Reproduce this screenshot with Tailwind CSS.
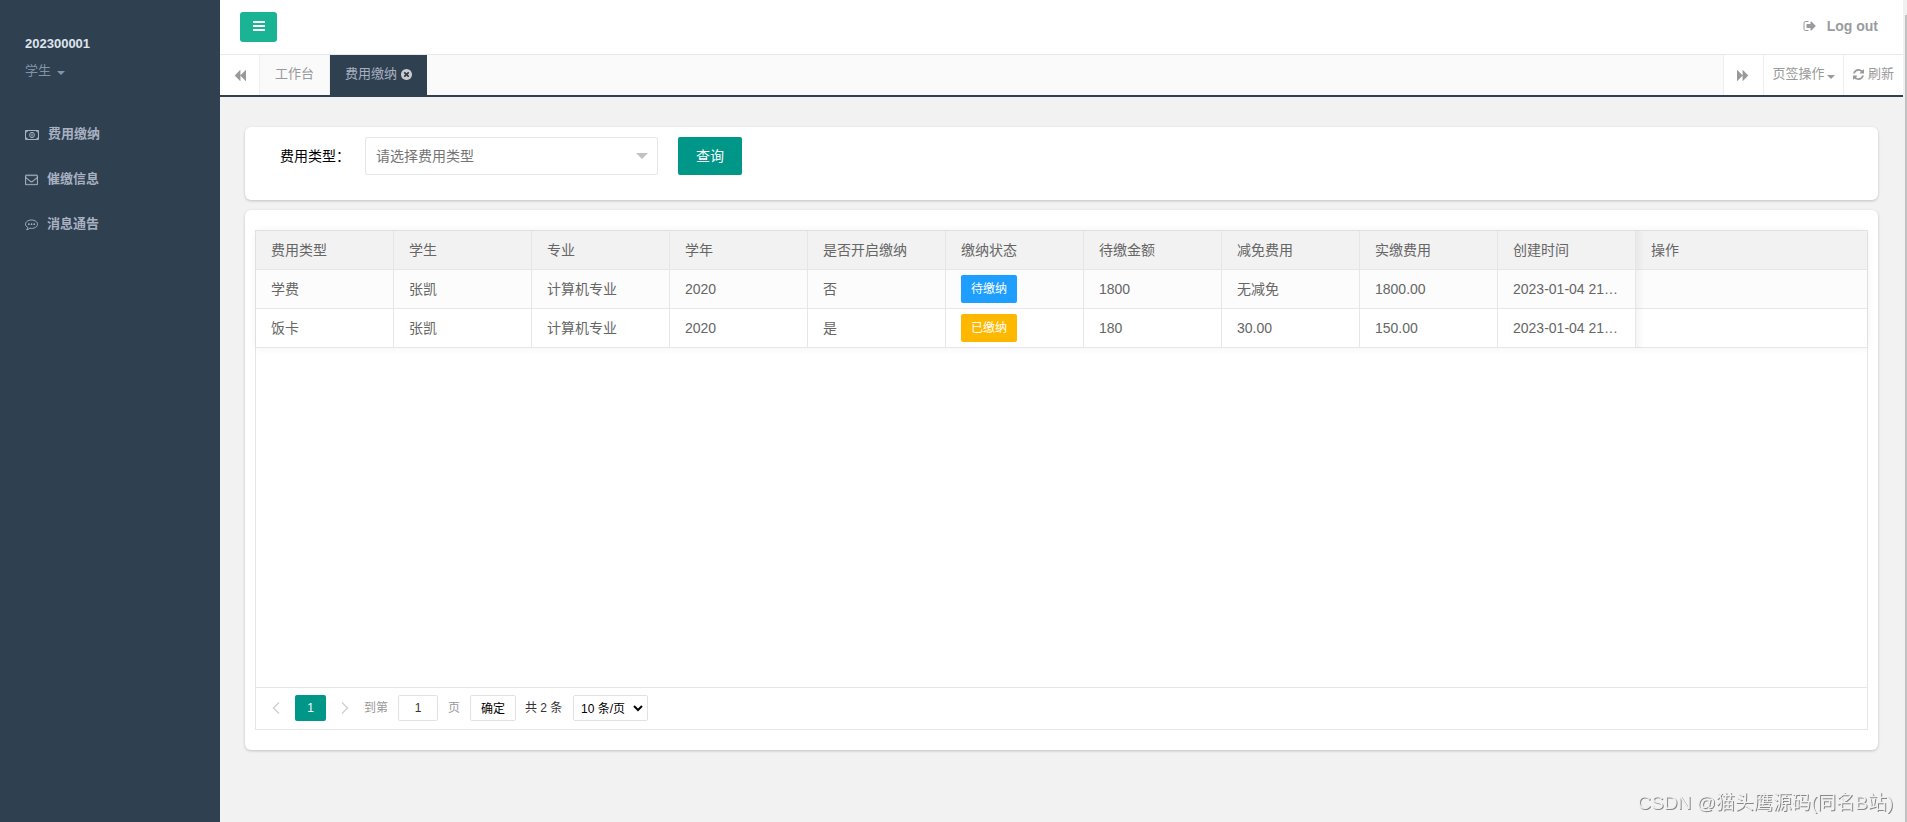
<!DOCTYPE html>
<html lang="zh-CN">
<head>
<meta charset="utf-8">
<title>费用缴纳</title>
<script src="https://cdn.jsdelivr.net/npm/@tailwindcss/browser@4"></script>
</head>
<body class="flex h-screen overflow-hidden bg-[#f2f2f2] font-['Liberation_Sans','Noto_Sans_CJK_SC',sans-serif] text-sm text-[#666]">

<aside class="flex w-[220px] shrink-0 flex-col bg-[#2f4050] text-[13px]">
  <div class="flex flex-col px-[25px] pt-[33px] pb-[29px]">
    <strong class="text-[13px] leading-[22px] text-[#dfe4ed]">202300001</strong>
    <button class="mt-1 flex items-center gap-[6px] leading-6 text-[#8095a8]">学生
      <svg class="mt-1" width="8" height="4" viewBox="0 0 8 4" fill="currentColor"><path d="M0 0h8L4 4z"/></svg>
    </button>
  </div>
  <nav class="flex flex-col font-bold text-[#a7b1c2]">
    <a href="#" class="flex h-[45px] items-center gap-[9px] px-[25px]">
      <svg width="14" height="10" viewBox="0 0 14 10" fill="none" stroke="currentColor"><path d="M.5.500h13v9H.5z"/><path d="M1 1h1.500L1 2.500zM13 1h-1.500L13 2.500zM1 9h1.500L1 7.500zM13 9h-1.500L13 7.500z"/><ellipse cx="7" cy="5" rx="2.300" ry="2.700"/><path d="M7 3.500v3"/></svg>
      费用缴纳</a>
    <a href="#" class="flex h-[45px] items-center gap-[9px] px-[25px]">
      <svg width="13" height="13" viewBox="0 0 1792 1792" fill="currentColor" stroke="currentColor" stroke-width="40"><path d="M1664 1504v-768q-32 36-69 66-268 206-426 338-51 43-83 67t-86.500 48.500-102.500 24.500h-2q-48 0-102.500-24.500t-86.500-48.500-83-67q-158-132-426-338-37-30-69-66v768q0 13 9.500 22.500t22.500 9.500h1472q13 0 22.500-9.500t9.500-22.500zm0-1051v-24.500l-.5-13-3-12.500-5.500-9-9-7.500-14-2.500h-1472q-13 0-22.500 9.500t-9.500 22.500q0 168 147 284 193 152 401 317 6 5 35 29.500t46 37.500 44.500 31.500 50.500 27.500 43 9h2q20 0 43-9t50.500-27.500 44.500-31.500 46-37.500 35-29.500q208-165 401-317 54-43 100.500-115.500t46.500-131.500zm128-37v1088q0 66-47 113t-113 47h-1472q-66 0-113-47t-47-113v-1088q0-66 47-113t113-47h1472q66 0 113 47t47 113z"/></svg>
      催缴信息</a>
    <a href="#" class="flex h-[45px] items-center gap-[9px] px-[25px]">
      <svg width="13" height="13" viewBox="0 0 13 13" fill="none" stroke="currentColor"><path d="M6.500 2C3.200 2 .5 3.900.5 6.200c0 1.400.9 2.500 2.300 3.300-.2.900-.6 1.600-1.200 2.200 1.300-.2 2.300-.7 3.200-1.500.5.100 1.100.2 1.700.2 3.300 0 6-1.900 6-4.200S9.800 2 6.500 2z"/><g fill="currentColor" stroke="none"><circle cx="3.800" cy="6.200" r=".9"/><circle cx="6.500" cy="6.200" r=".9"/><circle cx="9.200" cy="6.200" r=".9"/></g></svg>
      消息通告</a>
  </nav>
</aside>

<div class="flex min-w-0 flex-1 flex-col">
  <header class="flex h-[55px] shrink-0 items-center justify-between border-b border-[#e7eaec] bg-white pr-[29px] pl-5">
    <button aria-label="菜单" class="flex h-[30px] w-[37px] items-center justify-center rounded-[3px] bg-[#1ab394] text-white">
      <svg class="mb-[2px]" width="12" height="10" viewBox="0 0 12 10" fill="currentColor"><path d="M0 0h12v2H0zM0 4h12v2H0zM0 8h12v2H0z"/></svg>
    </button>
    <a href="#" class="flex items-center gap-[10px] pb-[2px] font-bold text-[#999c9e]">
      <svg width="14" height="14" viewBox="0 0 1792 1792" fill="currentColor"><path d="M704 1440q0 4 1 20t.5 26.500-3 23.500-10 19.500-20.500 6.500h-320q-119 0-203.500-84.500t-84.500-203.500v-704q0-119 84.500-203.500t203.500-84.500h320q13 0 22.500 9.500t9.500 22.500q0 4 1 20t.5 26.500-3 23.500-10 19.500-20.500 6.500h-320q-66 0-113 47t-47 113v704q0 66 47 113t113 47h312l11.500 1 11.500 3 8 5.500 7 9 2 13.500zm928-544q0 26-19 45l-544 544q-19 19-45 19t-45-19-19-45v-288h-448q-26 0-45-19t-19-45v-384q0-26 19-45t45-19h448v-288q0-26 19-45t45-19 45 19l544 544q19 19 19 45z"/></svg>
      Log out</a>
  </header>

  <div class="flex h-[42px] shrink-0 items-stretch border-b-2 border-[#2f4050] bg-[#fafafa] text-[13px] text-[#999]">
    <button aria-label="向左" class="flex w-10 items-center justify-center border-r border-[#eee] bg-white">
      <svg width="13" height="13" viewBox="0 0 1792 1792" fill="currentColor"><path d="M1747 141q19-19 32-13t13 32v1472q0 26-13 32t-32-13l-710-710q-9-9-13-19v710q0 26-13 32t-32-13l-710-710q-19-19-19-45t19-45l710-710q19-19 32-13t13 32v710q4-10 13-19z"/></svg>
    </button>
    <a href="#" class="flex items-center border-r border-[#eee] px-[15px] pb-px">工作台</a>
    <a href="#" class="flex items-center gap-1 bg-[#2f4050] px-[15px] pb-px text-[#a7b1c2]">费用缴纳
      <svg class="text-[#ccc]" width="11" height="11" viewBox="128 128 1536 1536" fill="currentColor"><path d="M1277 1122q0-26-19-45l-181-181 181-181q19-19 19-45 0-27-19-46l-90-90q-19-19-46-19-26 0-45 19l-181 181-181-181q-19-19-45-19-27 0-46 19l-90 90q-19 19-19 46 0 26 19 45l181 181-181 181q-19 19-19 45 0 27 19 46l90 90q19 19 46 19 26 0 45-19l181-181 181 181q19 19 45 19 27 0 46-19l90-90q19-19 19-46zm387-226q0 209-103 385.500t-279.500 279.500-385.500 103-385.500-103-279.500-279.500-103-385.500 103-385.500 279.500-279.500 385.500-103 385.500 103 279.500 279.500 103 385.500z"/></svg>
    </a>
    <button aria-label="向右" class="ml-auto flex w-10 items-center justify-center border-l border-[#eee] bg-white">
      <svg class="-scale-x-100" width="13" height="13" viewBox="0 0 1792 1792" fill="currentColor"><path d="M1747 141q19-19 32-13t13 32v1472q0 26-13 32t-32-13l-710-710q-9-9-13-19v710q0 26-13 32t-32-13l-710-710q-19-19-19-45t19-45l710-710q19-19 32-13t13 32v710q4-10 13-19z"/></svg>
    </button>
    <button class="flex w-20 items-center justify-center gap-[2px] border-l border-[#eee] bg-white pb-px">页签操作
      <svg class="mt-1" width="8" height="4" viewBox="0 0 8 4" fill="currentColor"><path d="M0 0h8L4 4z"/></svg>
    </button>
    <button class="mr-1 flex w-[60px] items-center justify-center gap-1 border-l border-[#eee] bg-white pb-px">
      <svg width="11" height="11" viewBox="128 128 1536 1536" fill="currentColor"><path d="M1639 1056q0 5-1 7-64 268-268 434.500t-478 166.500q-146 0-282.500-55t-243.500-157l-129 129q-19 19-45 19t-45-19-19-45v-448q0-26 19-45t45-19h448q26 0 45 19t19 45-19 45l-137 137q71 66 161 102t187 36q134 0 250-65t186-179q11-17 53-117 8-23 30-23h192q13 0 22.500 9.500t9.500 22.500zm25-800v448q0 26-19 45t-45 19h-448q-26 0-45-19t-19-45 19-45l138-138q-148-137-349-137-134 0-250 65t-186 179q-11 17-53 117-8 23-30 23h-199q-13 0-22.500-9.500t-9.500-22.500v-7q65-268 270-434.500t480-166.500q146 0 284 55.500t245 156.500l130-129q19-19 45-19t45 19 19 45z"/></svg>
      刷新</button>
  </div>

  <main class="flex flex-1 flex-col gap-[10px] pt-[30px] pr-[29px] pl-[25px]">
    <form class="flex rounded-md bg-white px-[35px] pt-[10px] pb-[25px] text-black shadow-[0_1px_3px_rgba(0,0,0,0.2)]">
      <label for="fee" class="w-[85px] leading-[38px]">费用类型：</label>
      <div class="relative w-[293px]">
        <select id="fee" class="h-[38px] w-full appearance-none rounded-[2px] border border-[#e6e6e6] bg-white px-[10px] text-[#757575]"><option>请选择费用类型</option></select>
        <svg class="pointer-events-none absolute top-4 right-[10px]" width="12" height="6" viewBox="0 0 12 6" fill="#c2c2c2"><path d="M0 0h12L6 6z"/></svg>
      </div>
      <button type="button" class="ml-5 h-[38px] w-16 rounded-[2px] bg-[#009688] text-white">查询</button>
    </form>

    <section class="rounded-md bg-white px-[10px] py-5 shadow-[0_1px_3px_rgba(0,0,0,0.2)]">
      <div class="flex h-[500px] flex-col border border-[#e6e6e6]">
        <div class="relative">
          <table class="w-full table-fixed border-separate border-spacing-0 text-left shadow-[0_0_8px_rgba(0,0,0,0.06)]">
            <colgroup><col class="w-[138px]"><col class="w-[138px]"><col class="w-[138px]"><col class="w-[138px]"><col class="w-[138px]"><col class="w-[138px]"><col class="w-[138px]"><col class="w-[138px]"><col class="w-[138px]"><col class="w-[138px]"><col></colgroup>
            <thead class="bg-[#f2f2f2]">
              <tr class="h-[39px] *:border-r *:border-b *:border-[#e6e6e6] *:px-[15px] *:font-normal *:last:border-r-0">
                <th>费用类型</th><th>学生</th><th>专业</th><th>学年</th><th>是否开启缴纳</th><th>缴纳状态</th><th>待缴金额</th><th>减免费用</th><th>实缴费用</th><th>创建时间</th><th>操作</th>
              </tr>
            </thead>
            <tbody>
              <tr class="h-[39px] bg-[#fcfcfc] *:border-r *:border-b *:border-[#e6e6e6] *:px-[15px] *:last:border-r-0">
                <td>学费</td><td>张凯</td><td>计算机专业</td><td>2020</td><td>否</td>
                <td><button class="block h-7 w-14 rounded-[2px] bg-[#1e9fff] text-xs text-white">待缴纳</button></td>
                <td>1800</td><td>无减免</td><td>1800.00</td><td class="whitespace-nowrap">2023-01-04 21…</td><td></td>
              </tr>
              <tr class="h-[39px] bg-white *:border-r *:border-b *:border-[#e6e6e6] *:px-[15px] *:last:border-r-0">
                <td>饭卡</td><td>张凯</td><td>计算机专业</td><td>2020</td><td>是</td>
                <td><button class="block h-7 w-14 rounded-[2px] bg-[#ffb800] text-xs text-white">已缴纳</button></td>
                <td>180</td><td>30.00</td><td>150.00</td><td class="whitespace-nowrap">2023-01-04 21…</td><td></td>
              </tr>
            </tbody>
          </table>
          <div class="pointer-events-none absolute inset-y-0 right-0 left-[1380px] bg-linear-to-r from-black/4 to-transparent to-[8px]"></div>
        </div>

        <div class="mt-auto flex h-[42px] items-start border-t border-[#e6e6e6] pt-[7px] pl-4 text-xs leading-[26px] text-[#333]">
          <button aria-label="上一页" class="flex h-[26px] w-2 items-center text-[#d2d2d2]">
            <svg width="8" height="12" viewBox="0 0 8 12" fill="none" stroke="currentColor" stroke-width="1.500"><path d="M7 .5L1.500 6 7 11.500"/></svg>
          </button>
          <button class="ml-[15px] h-[26px] w-[31px] rounded-[2px] bg-[#009688] text-white">1</button>
          <button aria-label="下一页" class="ml-[15px] flex h-[26px] w-2 items-center text-[#d2d2d2]">
            <svg width="8" height="12" viewBox="0 0 8 12" fill="none" stroke="currentColor" stroke-width="1.500"><path d="M1 .5L6.500 6 1 11.500"/></svg>
          </button>
          <label for="page" class="ml-[15px] text-[#999]">到第</label>
          <input id="page" value="1" class="ml-[10px] h-[26px] w-10 rounded-[2px] border border-[#e2e2e2] text-center">
          <span class="ml-[10px] text-[#999]">页</span>
          <button class="ml-[10px] h-[26px] w-[46px] rounded-[2px] border border-[#e2e2e2] text-black">确定</button>
          <span class="ml-[9px] w-[38px] whitespace-nowrap">共 2 条</span>
          <div class="relative ml-[10px] w-[75px]">
            <select aria-label="每页条数" class="block h-[26px] w-full appearance-none rounded-[2px] border border-[#e2e2e2] pl-[7px] text-black"><option>10 条/页</option></select>
            <svg class="pointer-events-none absolute top-[10px] right-[5px]" width="10" height="7" viewBox="0 0 10 7" fill="none" stroke="#000" stroke-width="2"><path d="M1 1l4 4 4-4"/></svg>
          </div>
        </div>
      </div>
    </section>
  </main>
</div>

<div class="fixed top-0 right-0 h-full w-1 bg-[#f1f1f1] pt-[15px] pl-[2px]"><div class="h-full bg-[#c1c1c1]"></div></div>
<div class="pointer-events-none fixed right-[14px] bottom-[6px] text-[19px] text-[#f0f0f0] [text-shadow:1px_1px_0_#888]">CSDN @猫头鹰源码(同名B站)</div>
</body>
</html>
